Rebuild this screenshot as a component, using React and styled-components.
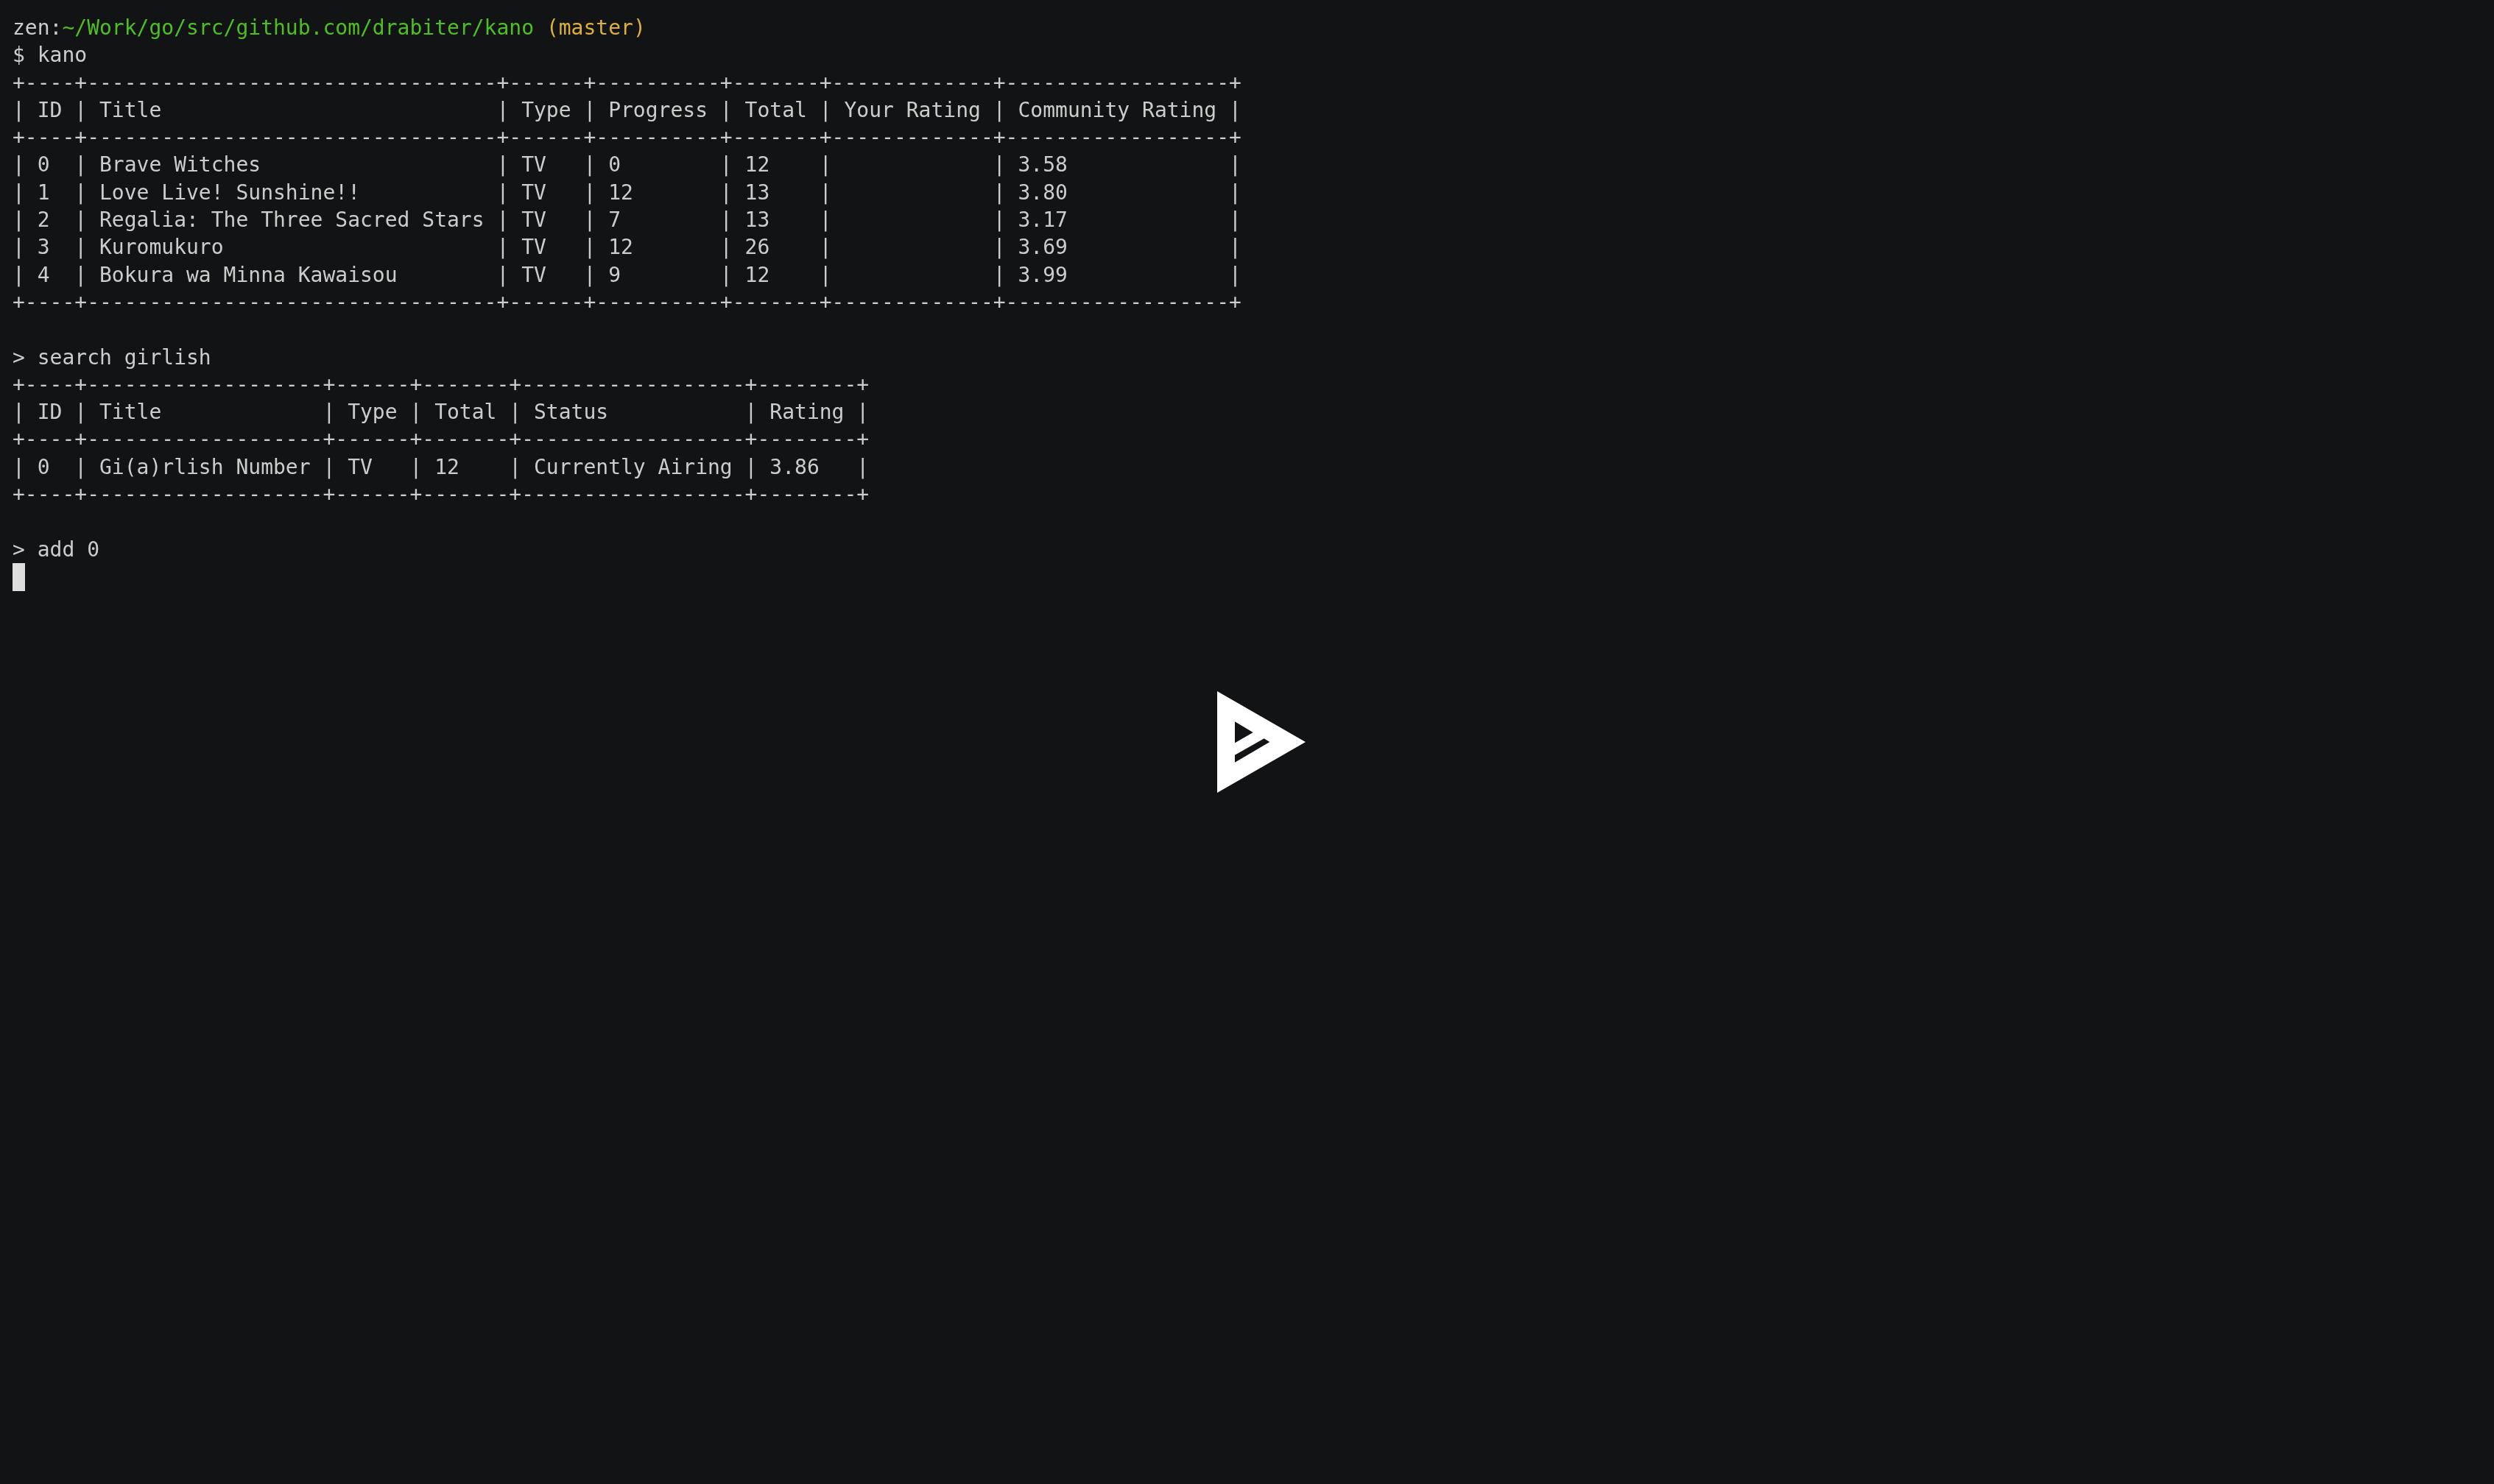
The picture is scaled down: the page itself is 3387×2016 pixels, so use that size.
import React from 'react';
import styled, { createGlobalStyle } from 'styled-components';

const GlobalStyle = createGlobalStyle`
    html, body {
        margin: 0;
        padding: 0;
        height: 100%;
        background-color: #121314;
    }
    #root {
        height: 100%;
    }
`;

const Player = styled.div`
    position: relative;
    height: 2016px;
    overflow: hidden;
    background-color: #121314;
    padding: 19px 17px 0;
    box-sizing: border-box;
`;

const Terminal = styled.pre`
    margin: 0;
    font-family: "DejaVu Sans Mono", "Liberation Mono", monospace;
    font-size: 28px;
    line-height: 37.3px;
    color: #cccccc;
    will-change: transform;
`;

const Line = styled.div`
    height: 37.3px;
    white-space: pre;
`;

const Green = styled.span`
    color: #4ebf22;
`;

const Yellow = styled.span`
    color: #ddaf3c;
`;

const Cursor = styled.span`
    display: block;
    width: 17px;
    height: 38px;
    background-color: #dddddd;
`;

const Overlay = styled.div`
    position: absolute;
    inset: 0;
    padding-left: 39px;
    display: flex;
    align-items: center;
    justify-content: center;
`;

const output = [
    '$ kano',
    '+----+---------------------------------+------+----------+-------+-------------+------------------+',
    '| ID | Title                           | Type | Progress | Total | Your Rating | Community Rating |',
    '+----+---------------------------------+------+----------+-------+-------------+------------------+',
    '| 0  | Brave Witches                   | TV   | 0        | 12    |             | 3.58             |',
    '| 1  | Love Live! Sunshine!!           | TV   | 12       | 13    |             | 3.80             |',
    '| 2  | Regalia: The Three Sacred Stars | TV   | 7        | 13    |             | 3.17             |',
    '| 3  | Kuromukuro                      | TV   | 12       | 26    |             | 3.69             |',
    '| 4  | Bokura wa Minna Kawaisou        | TV   | 9        | 12    |             | 3.99             |',
    '+----+---------------------------------+------+----------+-------+-------------+------------------+',
    '',
    '> search girlish',
    '+----+-------------------+------+-------+------------------+--------+',
    '| ID | Title             | Type | Total | Status           | Rating |',
    '+----+-------------------+------+-------+------------------+--------+',
    '| 0  | Gi(a)rlish Number | TV   | 12    | Currently Airing | 3.86   |',
    '+----+-------------------+------+-------+------------------+--------+',
    '',
    '> add 0',
];

function PlayButton() {
    return (
        <svg width="120" height="138" viewBox="0 0 120 138">
            <path
                fill="#ffffff"
                fillRule="evenodd"
                d="M0 0 L120 69 L0 138 Z M24 41.3 L24 70.3 L48.7 56 Z M63.7 64.3 L24 86.7 L24 96.7 L71.3 69 Z"
            />
        </svg>
    );
}

function App() {
    return (
        <>
            <GlobalStyle />
            <Player>
                <Terminal>
                    <Line>zen:<Green>~/Work/go/src/github.com/drabiter/kano</Green> <Yellow>(master)</Yellow></Line>
                    {output.map((text, i) => (
                        <Line key={i}>{text}</Line>
                    ))}
                    <Cursor />
                </Terminal>
                <Overlay>
                    <PlayButton />
                </Overlay>
            </Player>
        </>
    );
}

export default App;
